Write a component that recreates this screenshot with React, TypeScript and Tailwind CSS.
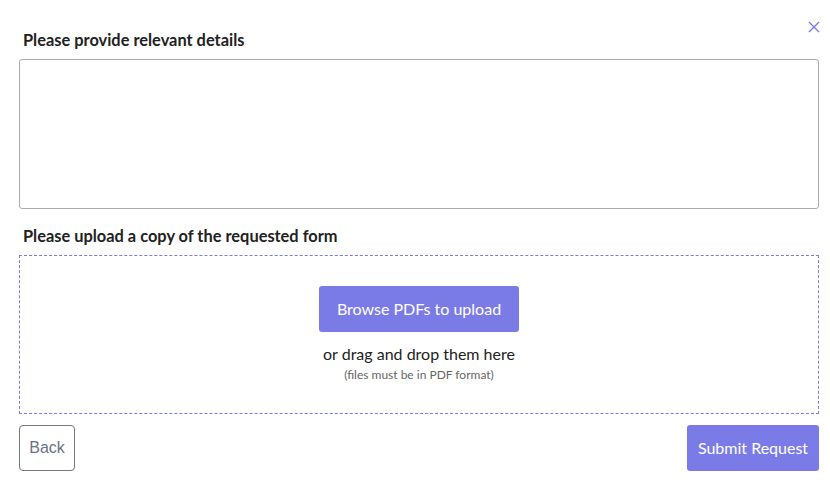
import React, { useState } from 'react';

const App: React.FC = () => {
  const [details, setDetails] = useState('');

  return (
    <div className="relative w-[830px] h-[482px] bg-white pl-[19px] pr-[11px] pt-[30px] font-['Lato',sans-serif] text-[#333]">
      <button className="absolute right-[9px] top-[20px] w-[14px] h-[14px] flex items-center justify-center">
        <svg width="12" height="12" viewBox="0 0 12 12" fill="none" stroke="#7b7be8" strokeWidth={1.4}>
          <path d="M1 1l10 10M11 1L1 11" />
        </svg>
      </button>

      <label className="block pl-[4px] text-[16.4px] leading-[19px] font-bold text-[#222] mb-[10px]">
        Please provide relevant details
      </label>
      <textarea
        value={details}
        onChange={e => setDetails(e.target.value)}
        className="block w-full h-[150px] border border-[#aaa] rounded-[3px] outline-none resize-none p-2 text-[15px]"
      />

      <label className="block pl-[4px] text-[16.4px] leading-[19px] font-bold text-[#222] mt-[17px] mb-[10px]">
        Please upload a copy of the requested form
      </label>
      <div className="h-[159px] border border-dashed border-[#7b7be8] flex flex-col items-center pt-[30px]">
        <button className="w-[200px] h-[46px] bg-[#7b7be8] rounded-[3px] text-white text-[16px]">
          Browse PDFs to upload
        </button>
        <p className="mt-[12px] text-[16px] leading-[20px] text-[#222]">or drag and drop them here</p>
        <p className="mt-[3px] text-[12px] leading-[15px] text-[#666]">(files must be in PDF format)</p>
      </div>

      <div className="flex justify-between mt-[11px]">
        <button className="w-[56px] h-[46px] border border-[#777] rounded-[4px] text-[16px] text-[#6b7280] font-['Liberation_Sans',sans-serif]">
          Back
        </button>
        <button className="w-[132px] h-[46px] bg-[#7b7be8] rounded-[3px] text-white text-[16px]">
          Submit Request
        </button>
      </div>
    </div>
  );
};

export default App;
